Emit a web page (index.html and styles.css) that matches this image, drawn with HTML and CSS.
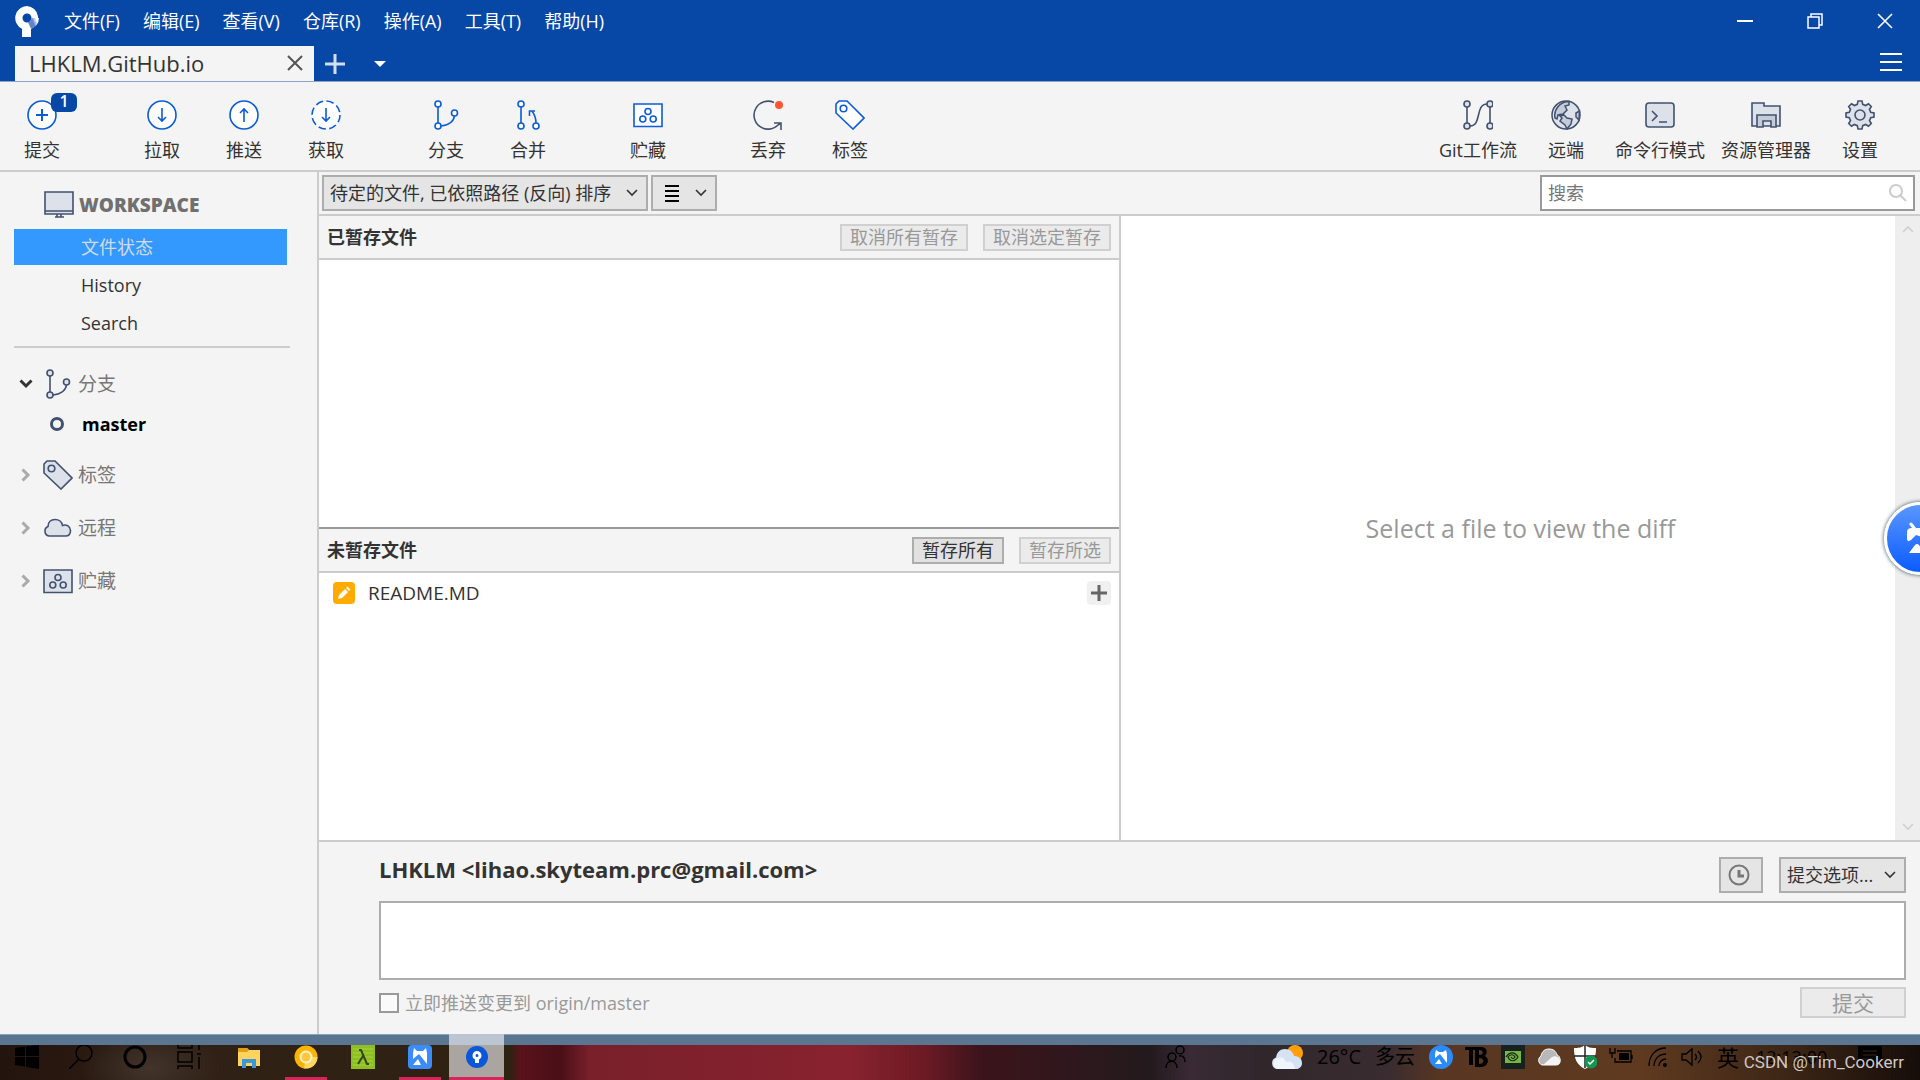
FILE: index.html
```
<!DOCTYPE html>
<html lang="zh-CN">
<head>
    <meta charset="UTF-8">
    <title>Sourcetree</title>
    <link rel="stylesheet" href="styles.css">
</head>
<body>
    <!-- shared icon shapes -->
    <svg class="sprite" width="0" height="0" aria-hidden="true">
        <symbol id="i-branch" viewBox="0 0 30 30" stroke-width="1.600">
            <path d="M7 7v16M10 26c8-1 13-5 13.500-10.500" fill="none"/>
            <circle cx="7" cy="4" r="3"/><circle cx="7" cy="26" r="3"/><circle cx="23.500" cy="13" r="3"/>
        </symbol>
        <symbol id="i-tag" viewBox="0 0 30 30" stroke-width="1.600">
            <path d="M1 4l3-3h8l17 17-11 11L1 13z"/><circle cx="8.500" cy="8.500" r="3.300"/>
        </symbol>
        <symbol id="i-stash" viewBox="0 0 30 30" stroke-width="1.600">
            <path d="M1 4h28v22.500H1z"/>
            <circle cx="15" cy="11.500" r="3"/><circle cx="9.800" cy="19" r="3"/><circle cx="20.200" cy="19" r="3"/>
        </symbol>
        <symbol id="i-down" viewBox="0 0 12 8" stroke-width="1.600">
            <path d="M1 1l5 5 5-5"/>
        </symbol>
        <symbol id="i-caret" viewBox="0 0 10 14">
            <path d="M1.500 1.500L7 7l-5.500 5.500"/>
        </symbol>
    </svg>

    <header class="titlebar">
        <nav class="menubar">
            <svg class="logo" viewBox="0 0 24 31">
                <defs><linearGradient id="lg" x1="0.500" y1="0.500" x2="1" y2="0.300"><stop offset="0" stop-color="#5f86c6"/><stop offset="0.700" stop-color="#fff"/></linearGradient></defs>
                <path d="M12 0A12 12 0 0 0 7 22.800V31h9v-8.100A12 12 0 0 0 12 0zm0 7.500a4.500 4.500 0 1 1 0 9 4.500 4.500 0 0 1 0-9z" fill="#fff"/>
                <path d="M16.500 12A4.500 4.500 0 0 1 13 16.400L16 22.800A12 12 0 0 0 24 12z" fill="url(#lg)"/>
            </svg>
            <button type="button">文件(F)</button>
            <button type="button">编辑(E)</button>
            <button type="button">查看(V)</button>
            <button type="button">仓库(R)</button>
            <button type="button">操作(A)</button>
            <button type="button">工具(T)</button>
            <button type="button">帮助(H)</button>
            <div class="window-controls">
                <button type="button" aria-label="最小化"><svg viewBox="0 0 16 16"><path d="M0 8h16" stroke-width="2"/></svg></button>
                <button type="button" aria-label="还原"><svg viewBox="0 0 16 16"><path d="M1 4h11v11H1zM4 4V1h11v11h-3" stroke-width="1.500"/></svg></button>
                <button type="button" aria-label="关闭"><svg viewBox="0 0 16 16"><path d="M1 1l14 14M15 1L1 15" stroke-width="1.600"/></svg></button>
            </div>
        </nav>
        <div class="tabs">
            <div class="tab">
                <span>LHKLM.GitHub.io</span>
                <button type="button" aria-label="关闭标签页"><svg width="16" height="16" viewBox="0 0 16 16"><path d="M1 1l14 14M15 1L1 15"/></svg></button>
            </div>
            <button type="button" class="tab-add" aria-label="新建标签页"><svg width="22" height="22" viewBox="0 0 22 22"><path d="M11 1v20M1 11h20"/></svg></button>
            <button type="button" class="tab-list" aria-label="标签列表"><svg width="12" height="6" viewBox="0 0 12 6"><path d="M0 0h12L6 6z"/></svg></button>
            <button type="button" class="hamburger" aria-label="菜单"><svg width="22" height="20" viewBox="0 0 22 20"><path d="M0 2h22M0 10h22M0 18h22"/></svg></button>
        </div>
    </header>

    <div class="toolbar">
        <div class="tool-group">
            <button type="button" class="tool">
                <svg viewBox="0 0 30 30"><circle cx="15" cy="15" r="14" stroke-width="1.600"/><path d="M15 9v12M9 15h12"/></svg>提交
                <span class="badge">1</span>
            </button>
        </div>
        <div class="tool-group">
            <button type="button" class="tool"><svg viewBox="0 0 30 30"><circle cx="15" cy="15" r="14" stroke-width="1.600"/><path d="M15 8v13M11 17l4 4 4-4" stroke-width="1.600"/></svg>拉取</button>
            <button type="button" class="tool"><svg viewBox="0 0 30 30"><circle cx="15" cy="15" r="14" stroke-width="1.600"/><path d="M15 22V9M11 13l4-4 4 4" fill="none" stroke-width="1.600"/></svg>推送</button>
            <button type="button" class="tool"><svg viewBox="0 0 30 30"><circle cx="15" cy="15" r="14" stroke-dasharray="7.500 3.500" stroke-width="1.600"/><path d="M15 8v13M11 17l4 4 4-4" stroke-width="1.600"/></svg>获取</button>
        </div>
        <div class="tool-group">
            <button type="button" class="tool"><svg><use href="#i-branch"/></svg>分支</button>
            <button type="button" class="tool"><svg viewBox="0 0 30 30"><g stroke-width="1.600"><path d="M8 7v16M23 23c0-5-1-8-4-12M16.500 16v-5H22" fill="none"/><circle cx="8" cy="4" r="3"/><circle cx="8" cy="26" r="3"/><circle cx="23" cy="26" r="3"/></g></svg>合并</button>
        </div>
        <div class="tool-group">
            <button type="button" class="tool"><svg><use href="#i-stash"/></svg>贮藏</button>
        </div>
        <div class="tool-group">
            <button type="button" class="tool"><svg class="plain" viewBox="0 0 30 30"><path d="M21 2.500A14 14 0 1 0 25 25l3-2M21 23h7v7" stroke-width="1.600"/><circle class="dot" cx="26" cy="5" r="4"/></svg>丢弃</button>
            <button type="button" class="tool"><svg><use href="#i-tag"/></svg>标签</button>
        </div>
        <div class="tool-group right">
            <button type="button" class="tool gray"><svg viewBox="0 0 30 30"><g stroke-width="1.600"><path d="M4 7v16M27 7v16M7 26c12 0 5-22 17-22" fill="none"/><circle cx="4" cy="4" r="3"/><circle cx="4" cy="26" r="3"/><circle cx="27" cy="4" r="3"/><circle cx="27" cy="26" r="3"/></g></svg>Git工作流</button>
            <button type="button" class="tool gray"><svg viewBox="0 0 30 30"><g stroke-width="1.500"><circle cx="15" cy="15" r="14"/><path class="dark" d="M18 1.500V5l-4 1 2 4-4 4-5 1-1 4-2-1A14 14 0 0 1 18 1.500zM9 16l4-1 3 3 5 1-1 5-4 5-2-4-5-4 2-3zM28.500 11L25 13v4l3 3z"/></g></svg>远端</button>
            <button type="button" class="tool gray"><svg viewBox="0 0 30 30"><g stroke-width="1.600"><rect x="1" y="3" width="28" height="24" rx="3"/><path d="M7 11l5 5-5 5M14 22h8" fill="none"/></g></svg>命令行模式</button>
            <button type="button" class="tool gray"><svg viewBox="0 0 30 30"><g stroke-width="1.600"><path d="M1 3h12v3h16v20H1z"/><path class="dark" d="M6 15h19v12h-5v-6h-8v6H6z"/></g></svg>资源管理器</button>
            <button type="button" class="tool gray"><svg viewBox="0 0 30 30"><g stroke-width="1.600"><path d="M12.300 4.300L13 1h4l.7 3.300 2.900 1.200L23.500 3.700l2.800 2.800-1.800 2.900 1.200 2.900 3.300.7v4l-3.300.7-1.200 2.900 1.800 2.900-2.800 2.800-2.900-1.800-2.900 1.200L17 29h-4l-.7-3.300-2.900-1.200-2.900 1.800-2.800-2.800 1.800-2.900-1.200-2.900L1 17v-4l3.300-.7 1.200-2.900-1.800-2.900 2.800-2.800 2.900 1.800z"/><circle cx="15" cy="15" r="5"/></g></svg>设置</button>
        </div>
    </div>

    <div class="workspace">
        <aside class="sidebar">
            <h2><svg class="icon" viewBox="0 0 30 30"><path d="M1 2h28v22H1z" stroke-width="1.600"/><path d="M1 21h28M11 27h9M13 24v3M17 24v3" stroke-width="1.600"/></svg>WORKSPACE</h2>
            <ul class="views">
                <li><a href="#status" class="active">文件状态</a></li>
                <li><a href="#history">History</a></li>
                <li><a href="#search">Search</a></li>
            </ul>
            <ul class="tree">
                <li><button type="button" class="open"><svg class="caret" width="10" height="14"><use href="#i-caret"/></svg><svg class="icon"><use href="#i-branch"/></svg>分支</button>
                    <a href="#master" class="branch"><span class="ring"></span>master</a>
                </li>
                <li><button type="button"><svg class="caret" width="10" height="14"><use href="#i-caret"/></svg><svg class="icon"><use href="#i-tag"/></svg>标签</button></li>
                <li><button type="button"><svg class="caret" width="10" height="14"><use href="#i-caret"/></svg><svg class="icon" viewBox="0 0 30 30"><path d="M6 23a5 5 0 0 1-1-9.500C5 9 8 6.500 12 6.500c4 0 7 2.500 7.500 6 4-1.500 8 1 8 5 0 3.500-2 5.500-5 5.500z" stroke-width="1.600"/></svg>远程</button></li>
                <li><button type="button"><svg class="caret" width="10" height="14"><use href="#i-caret"/></svg><svg class="icon"><use href="#i-stash"/></svg>贮藏</button></li>
            </ul>
        </aside>

        <main class="content">
            <div class="filter-bar">
                <div class="select-box">
                    <select class="sort" aria-label="排序">
                        <option>待定的文件, 已依照路径 (反向) 排序</option>
                    </select>
                    <svg class="chevron" width="12" height="8"><use href="#i-down"/></svg>
                </div>
                <button type="button" class="view-btn" aria-label="视图">
                    <svg width="14" height="18" viewBox="0 0 14 18"><path d="M0 2h14M0 7h14M0 12h14M0 17h14"/></svg>
                    <svg class="chevron" width="12" height="8"><use href="#i-down"/></svg>
                </button>
                <div class="search-box">
                    <input type="text" placeholder="搜索" aria-label="搜索">
                    <svg width="20" height="20" viewBox="0 0 20 20"><circle cx="8" cy="8" r="6"/><path d="M12 12l6 6"/></svg>
                </div>
            </div>

            <div class="panes">
                <div class="files">
                    <section class="pane">
                        <div class="pane-header">
                            <h3>已暂存文件</h3>
                            <button type="button" class="btn" disabled>取消所有暂存</button>
                            <button type="button" class="btn" disabled>取消选定暂存</button>
                        </div>
                    </section>
                    <section class="pane">
                        <div class="pane-header">
                            <h3>未暂存文件</h3>
                            <button type="button" class="btn">暂存所有</button>
                            <button type="button" class="btn" disabled>暂存所选</button>
                        </div>
                        <ul class="file-list">
                            <li>
                                <svg width="22" height="22" viewBox="0 0 22 22"><rect width="22" height="22" rx="4" fill="#ffab00"/><path d="M5 17l1-4 6-6 3 3-6 6zM13 6l1.500-1.500 3 3L16 9z" fill="#fff"/></svg>
                                <span>README.MD</span>
                                <button type="button" aria-label="暂存文件"><svg width="16" height="16" viewBox="0 0 16 16"><path d="M8 0v16M0 8h16"/></svg></button>
                            </li>
                        </ul>
                    </section>
                </div>
                <section class="diff">
                    <p>Select a file to view the diff</p>
                    <div class="scrollbar">
                        <svg class="up" width="12" height="8"><use href="#i-down"/></svg>
                        <svg width="12" height="8"><use href="#i-down"/></svg>
                    </div>
                </section>
            </div>

            <form class="commit">
                <div class="commit-head">
                    <label for="message">LHKLM &lt;lihao.skyteam.prc@gmail.com&gt;</label>
                    <button type="button" class="history-btn" aria-label="历史提交信息"><svg width="22" height="22" viewBox="0 0 22 22"><circle cx="11" cy="11" r="9.500"/><path d="M11 6v6h5" stroke-width="3"/></svg></button>
                    <div class="select-box">
                        <select class="options" aria-label="提交选项">
                            <option>提交选项...</option>
                        </select>
                        <svg class="chevron" width="12" height="8"><use href="#i-down"/></svg>
                    </div>
                </div>
                <textarea id="message"></textarea>
                <div class="commit-foot">
                    <input type="checkbox" id="push">
                    <label for="push">立即推送变更到 origin/master</label>
                    <button type="submit" class="btn submit-btn" disabled>提交</button>
                </div>
            </form>
        </main>
    </div>

    <footer class="taskbar">
        <div class="system">
            <svg viewBox="0 0 24 24"><path d="M0 3l10-1.500V11H0zM11 1.500L24 0v11H11zM0 12h10v9.500L0 20zM11 12h13v12l-13-2z"/></svg>
            <svg class="line" viewBox="0 0 24 24"><g stroke-width="1.500"><circle cx="15" cy="8" r="8"/><path d="M10 14L0 24"/></g></svg>
            <svg class="line" viewBox="0 0 24 24"><circle cx="12" cy="12" r="10" stroke-width="3"/></svg>
            <svg class="line" viewBox="0 0 24 24"><path d="M1 0v3h14V0M1 7h14v10H1zM1 24v-3h14v3M22 0v5M22 12v12M20 9h4" stroke-width="1.500"/></svg>
        </div>
        <div class="apps">
            <span class="app"><svg viewBox="0 0 24 24"><path d="M1 3h9l2 2h11v16H1z" fill="#ffd35c"/><path d="M1 3h9l2 2-2 2H1z" fill="#e0a010"/><path d="M5 14h14v9h-4v-5H9v5H5z" fill="#3a96dd"/></svg></span>
            <span class="app running"><svg viewBox="0 0 24 24"><circle cx="12" cy="12" r="11.500" fill="#fdb400"/><path d="M12 12h11.500A11.500 11.500 0 0 1 10 23.300z" fill="#ffd860"/><circle cx="12" cy="12" r="5.500" fill="#ffc83c" stroke="#fff3c8" stroke-width="2"/></svg></span>
            <span class="app"><svg viewBox="0 0 24 24"><path d="M0 0h24v24H0z" fill="#8ebe22"/><path d="M2 4h20M2 8h20M2 12h20M2 16h20M2 20h20" stroke="#a5d438"/><path d="M8 5h2l6 14h2M12 11L7 19" fill="none" stroke="#35451c" stroke-width="2"/></svg></span>
            <span class="app running"><svg viewBox="0 0 24 24"><rect width="24" height="24" rx="4" fill="#3b8cf8"/><path d="M5 8l1-5 3 3h6l3-3 1 5v11L11 9l-6 5z" fill="#fff"/><path d="M5 20l5-6 3 6z" fill="#fff"/></svg></span>
            <span class="app running current"><svg viewBox="0 0 24 24"><circle cx="12" cy="12" r="11" fill="#0a57dc"/><path d="M12 6a4.500 4.500 0 0 0-2 8.500V18h4v-3.500A4.500 4.500 0 0 0 12 6zm0 3a1.500 1.500 0 1 1 0 3 1.500 1.500 0 0 1 0-3z" fill="#fff"/></svg></span>
        </div>
        <svg class="line people" viewBox="0 0 24 24"><g stroke-width="1.500"><circle cx="17" cy="5" r="4"/><circle cx="9" cy="12" r="4"/><path d="M3 23c0-9 11-9 11 0M16 11c4-1 6 2 6 6"/></g></svg>
        <div class="weather">
            <svg viewBox="0 0 32 26"><circle cx="24" cy="9" r="8" fill="#ff9f0a"/><path d="M6 25a6 6 0 0 1-1-11.500C6 8 9 5 14 5s8 3 9 7c4 0 8 2 8 7 0 4-3 6-6 6z" fill="#d5e2f6"/><path d="M6 25a6 6 0 0 1 0-11c5-2 8 1 9 4 5-2 8 1 9 7z" fill="#f0f5fd"/></svg>
            <span>26°C</span>
            <span>多云</span>
        </div>
        <div class="tray">
            <svg viewBox="0 0 24 24"><circle cx="12" cy="12" r="12" fill="#2b8bfa"/><path d="M6 9l1-4 3 2h4l3-2 1 4v9L11 9l-5 4zM6 19l4-5 3 5z" fill="#fff"/></svg>
            <svg viewBox="0 0 24 24"><path d="M0 2h12v3H8v15H4V5H0z"/><path d="M10 2h6c7 0 7 8 3 9 6 1 5 11-3 11h-6zm4 3v5c5 0 5-5 0-5zm0 8v6c6 0 6-6 0-6z" fill-rule="evenodd"/></svg>
            <svg viewBox="0 0 24 24"><path d="M0 0h24v24H0z" fill="#17211f"/><path d="M4 6h16v12H4z" fill="#76b83f"/><path d="M5 12c4-6 9-5 12 0-3 5-8 5-10 0 2-3 6-3 7 0-1 2-3 2-4 0" fill="none" stroke="#17211f" stroke-width="1.200"/></svg>
            <svg viewBox="0 0 24 24"><path d="M5 20a5 5 0 0 1-1-9c1-5 4-7 8-7s7 2 8 6c4 1 5 10-1 10z" fill="#b8b8b8" stroke="#fff"/><path d="M6 20l9-8c4-2 8 1 8 4s-2 4-4 4z" fill="#f4f4f4"/></svg>
            <svg viewBox="0 0 24 24"><path d="M12 0c4 3 7 3 11 3 0 11-3 17-11 21C4 20 1 14 1 3c4 0 7 0 11-3z" fill="#fff"/><path d="M12 0v23M1 11h22" stroke="#222" stroke-width="1.500"/><circle cx="18" cy="17" r="6.500" fill="#13964f"/><path d="M15 17l2 2 4-4" fill="none" stroke="#fff" stroke-width="1.500"/></svg>
            <svg class="line" viewBox="0 0 24 24"><path d="M8 6h14v11H6v-4M23 10v4M1 3v5h5V3M3 8v5" stroke-width="1.300"/><path d="M10 8h10v7H10z" fill="#000" stroke="none"/></svg>
            <svg class="line" viewBox="0 0 24 24"><path d="M4 21C4 10 11 3 21 3M9 21c0-7 5-12 12-12M14 21c0-4 3-7 7-7" stroke-width="1.300"/><circle cx="20" cy="20" r="1"/></svg>
            <svg class="line" viewBox="0 0 24 24"><path d="M1 9h4l6-5v16l-6-5H1zM14 9c2 2 2 4 0 6M17 6c4 4 4 8 0 12" stroke-width="1.300"/></svg>
            <span class="ime">英</span>
        </div>
        <time class="clock">12:13:00</time>
        <svg class="notice" viewBox="0 0 24 24"><path d="M0 1h24v18h-8v5l-5-5H0z"/><path d="M5 6h14M5 10h14M5 14h9" stroke="#3a2618"/></svg>
        <span class="watermark">CSDN @Tim_Cookerr</span>
    </footer>

    <div class="float-ball">
        <svg width="32" height="34" viewBox="0 0 32 34"><path d="M1 10q0-4 5-4L3 2q2-3 4 0l3 4h12l3-4q2-3 4 0l-3 4q5 0 5 4v6q-2 5-6 1l-5-4-4 2-6-2-5 5q-4 3-4-2z"/><path d="M3 31l6-8q2-2 4 0l5 8z"/></svg>
    </div>
</body>
</html>
```
FILE: styles.css
```
* {
    box-sizing: border-box;
}
body {
    display: flex;
    flex-direction: column;
    height: 100vh;
    margin: 0;
    overflow: hidden;
    font-family: "Open Sans", "Noto Sans CJK SC", sans-serif;
    font-size: 18px;
    line-height: 24px;
    color: #333;
    background: #f4f4f4;
}
button, input, select, textarea {
    font: inherit;
    color: inherit;
}
button {
    padding: 0;
    border: none;
    background: none;
    cursor: pointer;
}
ul {
    list-style: none;
    margin: 0;
    padding: 0;
}
h2, h3, p {
    margin: 0;
}
a {
    color: inherit;
    text-decoration: none;
}
svg {
    flex: none;
    display: block;
}
.sprite {
    position: absolute;
}

/* title bar */
.titlebar {
    background: #0747a6;
    border-bottom: 1px solid #8fa3c8;
    color: #fff;
}
.menubar {
    display: flex;
    align-items: center;
    gap: 23px;
    height: 42px;
    padding-left: 15px;
}
.logo {
    width: 24px;
    height: 31px;
    margin-right: 2px;
}
.window-controls {
    display: flex;
    margin-left: auto;
}
.window-controls button {
    display: flex;
    justify-content: center;
    width: 70px;
}
.window-controls svg {
    width: 16px;
    height: 16px;
    fill: none;
    stroke: #fff;
    stroke-width: 2;
}
.tabs {
    display: flex;
    align-items: center;
    height: 39px;
    padding: 4px 18px 0 15px;
}
.tab {
    display: flex;
    align-items: center;
    justify-content: space-between;
    width: 299px;
    height: 35px;
    padding: 0 11px 2px 14px;
    background: #f4f4f4;
    color: #333;
    font-size: 22px;
}
.tab svg {
    fill: none;
    stroke: #555;
    stroke-width: 2;
}
.tab-add {
    margin-left: 10px;
}
.tab-add svg {
    fill: none;
    stroke: #d4e0f2;
    stroke-width: 3;
}
.tab-list {
    margin-left: 28px;
}
.tab-list svg {
    fill: #fff;
}
.hamburger {
    margin-left: auto;
    padding-bottom: 4px;
}
.hamburger svg {
    stroke: #fff;
    stroke-width: 2;
}

/* toolbar */
.toolbar {
    display: flex;
    gap: 38px;
    height: 90px;
    padding: 18px 19px 0 1px;
    border-bottom: 2px solid #ccc;
}
.tool-group {
    display: flex;
}
.tool-group.right {
    margin-left: auto;
}
.tool {
    position: relative;
    display: flex;
    flex-direction: column;
    align-items: center;
    gap: 8px;
    min-width: 82px;
    padding: 0 8px;
    white-space: nowrap;
}
.tool svg {
    width: 30px;
    height: 30px;
    fill: #fff;
    stroke: #0b5cd5;
    stroke-width: 2;
}
.tool.gray svg, .icon {
    fill: #dde1ea;
    stroke: #42526e;
    stroke-width: 2;
}
.tool .dark {
    fill: #c5ccd9;
}
.tool svg.plain {
    fill: none;
    stroke: #42526e;
}
.tool .dot {
    fill: #ff5630;
    stroke: none;
}
.badge {
    position: absolute;
    top: -7px;
    left: 50px;
    width: 26px;
    height: 19px;
    border-radius: 6px;
    background: #0747a6;
    color: #fff;
    font-size: 16px;
    font-weight: 600;
    line-height: 16px;
    text-align: center;
}

/* sidebar */
.workspace {
    display: flex;
    flex: 1;
    min-height: 0;
}
.sidebar {
    flex: none;
    width: 319px;
    padding: 16px 27px 0 14px;
    border-right: 2px solid #ccc;
}
.icon {
    width: 30px;
    height: 30px;
}
.sidebar h2 {
    display: flex;
    align-items: center;
    gap: 5px;
    height: 34px;
    margin-bottom: 7px;
    padding-left: 30px;
    color: #707070;
    font-size: 19px;
    font-weight: 800;
}
.views {
    padding-bottom: 3px;
    border-bottom: 2px solid #ccc;
}
.views a {
    display: block;
    height: 36px;
    margin: 0 3px 2px 0;
    padding-left: 67px;
    line-height: 36px;
}
.views .active {
    background: #3399ff;
    color: #d2d9e2;
}
.tree {
    padding-top: 14px;
}
.tree li {
    margin-bottom: 9px;
}
.tree button {
    display: flex;
    align-items: center;
    gap: 5px;
    width: 100%;
    height: 44px;
    color: #777;
    font-size: 19px;
}
.caret {
    margin: 0 7px;
    fill: none;
    stroke: #aaa;
    stroke-width: 3;
}
.open .caret {
    transform: rotate(90deg);
    stroke: #333;
}
.branch {
    display: flex;
    align-items: center;
    gap: 18px;
    height: 36px;
    margin-bottom: 11px;
    padding-left: 36px;
    color: #000;
    font-weight: 700;
}
.ring {
    width: 14px;
    height: 14px;
    border: 3px solid #42526e;
    border-radius: 50%;
}

/* main area */
.content {
    display: flex;
    flex: 1;
    flex-direction: column;
    min-width: 0;
}
.filter-bar {
    display: flex;
    gap: 3px;
    height: 44px;
    padding: 3px 5px 3px 3px;
    border-bottom: 2px solid #ccc;
}
.select-box, .search-box {
    display: grid;
    align-items: center;
}
.select-box > *, .search-box > * {
    grid-area: 1 / 1;
}
.select-box svg, .search-box svg {
    justify-self: end;
    margin-right: 7px;
    pointer-events: none;
}
.chevron {
    fill: none;
    stroke: #333;
    stroke-width: 2;
}
.select-box .chevron {
    margin-right: 10px;
}
select, .view-btn, .history-btn {
    height: 36px;
    border: 2px solid #adadad;
    border-radius: 0;
    background: #e5e5e5;
}
select {
    appearance: none;
    padding: 0 6px;
}
.sort {
    width: 326px;
}
.options {
    width: 127px;
}
.view-btn {
    display: flex;
    align-items: center;
    justify-content: space-between;
    width: 66px;
    padding: 0 8px 0 12px;
}
.view-btn svg:first-child {
    stroke: #000;
    stroke-width: 2;
}
.search-box {
    width: 375px;
    margin-left: auto;
}
.search-box input {
    width: 100%;
    height: 36px;
    padding: 0 6px;
    border: 2px solid #999;
}
.search-box input::placeholder {
    color: #777;
    opacity: 1;
}
.search-box svg {
    fill: none;
    stroke: #ccc;
    stroke-width: 2;
}
.panes {
    display: grid;
    grid-template-columns: minmax(0, 802fr) minmax(0, 799fr);
    flex: 1;
    min-height: 0;
    background: #fff;
}
.files {
    display: flex;
    flex-direction: column;
    border-right: 2px solid #ccc;
}
.pane {
    flex: 1;
}
.pane:first-child {
    border-bottom: 2px solid #999;
}
.pane-header {
    display: flex;
    align-items: center;
    gap: 15px;
    height: 44px;
    padding: 0 8px;
    border-bottom: 2px solid #ccc;
    background: #f4f4f4;
}
.pane-header h3 {
    margin-right: auto;
    font-size: 18px;
    font-weight: 700;
}
.btn {
    height: 27px;
    padding: 0 8px;
    border: 2px solid #adadad;
    background: #e1e1e1;
    line-height: 22px;
}
.btn:disabled {
    border-color: #d0d0d0;
    background: #ebebeb;
    color: #999;
}
.file-list li {
    display: flex;
    align-items: center;
    gap: 13px;
    height: 40px;
    padding: 0 8px 0 14px;
    font-size: 19px;
}
.file-list button {
    display: flex;
    align-items: center;
    justify-content: center;
    width: 24px;
    height: 24px;
    margin-left: auto;
    border-radius: 4px;
    background: #f0f0f0;
}
.file-list button svg {
    stroke: #666;
    stroke-width: 3;
}
.diff {
    display: grid;
    align-items: center;
}
.diff > * {
    grid-area: 1 / 1;
}
.diff p {
    color: #999;
    font-size: 25px;
    text-align: center;
}
.scrollbar {
    display: flex;
    flex-direction: column;
    align-items: center;
    justify-content: space-between;
    justify-self: end;
    align-self: stretch;
    width: 25px;
    padding: 9px 0;
    background: #eee;
}
.scrollbar svg {
    fill: none;
    stroke: #d0d0d0;
    stroke-width: 2;
}
.scrollbar .up {
    transform: rotate(180deg);
}

/* commit form */
.commit {
    padding: 15px 14px 16px 60px;
    border-top: 2px solid #ccc;
}
.commit-head {
    display: flex;
    align-items: center;
    gap: 16px;
}
.commit-head label {
    margin-right: auto;
    padding-bottom: 12px;
    font-size: 22px;
    font-weight: 700;
}
.history-btn {
    display: flex;
    align-items: center;
    justify-content: center;
    width: 44px;
    padding-right: 4px;
}
.history-btn svg {
    fill: none;
    stroke: #777;
    stroke-width: 2;
}
textarea {
    display: block;
    width: 100%;
    height: 79px;
    margin: 8px 0 7px;
    border: 2px solid #adadad;
    resize: none;
}
.commit-foot {
    display: flex;
    align-items: center;
    gap: 6px;
    color: #999;
}
.commit-foot input {
    appearance: none;
    width: 20px;
    height: 20px;
    margin: 0;
    border: 2px solid #999;
    background: #fafafa;
}
.submit-btn {
    width: 106px;
    height: 31px;
    margin-left: auto;
    font-size: 21px;
}

/* taskbar */
.taskbar {
    position: relative;
    display: flex;
    height: 46px;
    flex: none;
    background:
        linear-gradient(#8ba2b8 1px, #5b7690 1px) top / 100% 11px no-repeat,
        radial-gradient(ellipse 70px 40px at 150px 34px, #42342c, transparent),
        linear-gradient(90deg, #24140e 0, #302015 200px, #2e2212 510px, #5a121b 520px, #4a0f17 560px, #79202b 590px, #88222e 850px, #6c1a24 925px, #3c141b 980px, #231a1d 1150px, #392a35 1190px, #30272b 1260px, #3a2c30 1390px, #583621 1440px, #5f3a20 1640px, #3e2716 1780px, #160d0a 1920px);
    color: #000;
}
.taskbar svg {
    width: 24px;
    height: 24px;
}
.taskbar .line {
    fill: none;
    stroke: #000;
    stroke-width: 2;
}
.system {
    display: flex;
    align-items: center;
    gap: 30px;
    padding: 0 20px 0 15px;
}
.apps {
    display: flex;
    gap: 2px;
}
.app {
    display: flex;
    align-items: center;
    justify-content: center;
    width: 55px;
}
.running {
    background: linear-gradient(#d4265a, #d4265a) bottom / 42px 3px no-repeat;
}
.current {
    background:
        linear-gradient(#d4265a, #d4265a) bottom / 100% 3px no-repeat,
        linear-gradient(#bcc6d2 11px, #aaa5a0 11px);
}
.taskbar .people {
    align-self: center;
    margin-left: auto;
}
.weather {
    display: flex;
    align-items: center;
    gap: 14px;
    margin: 0 8px 0 84px;
    font-size: 20px;
}
.weather svg {
    width: 32px;
    height: 26px;
}
.tray {
    display: flex;
    align-items: center;
    gap: 12px;
    padding: 0 6px;
}
.ime {
    width: 24px;
    font-size: 22px;
}
.clock {
    align-self: center;
    width: 111px;
    padding-left: 9px;
}
.taskbar .notice {
    align-self: center;
    margin-right: 38px;
}
.watermark {
    position: absolute;
    right: 16px;
    bottom: 6px;
    color: #d0c8c4;
    font-family: Roboto, sans-serif;
    font-size: 17px;
}

.float-ball {
    position: absolute;
    top: 502px;
    right: -37px;
    display: flex;
    align-items: center;
    width: 73px;
    height: 73px;
    padding-left: 19px;
    border: 3px solid #fff;
    border-radius: 50%;
    background: linear-gradient(#5a96ff, #0a5cff);
    box-shadow: 0 0 4px #345;
}
.float-ball svg {
    fill: #fff;
}
```
